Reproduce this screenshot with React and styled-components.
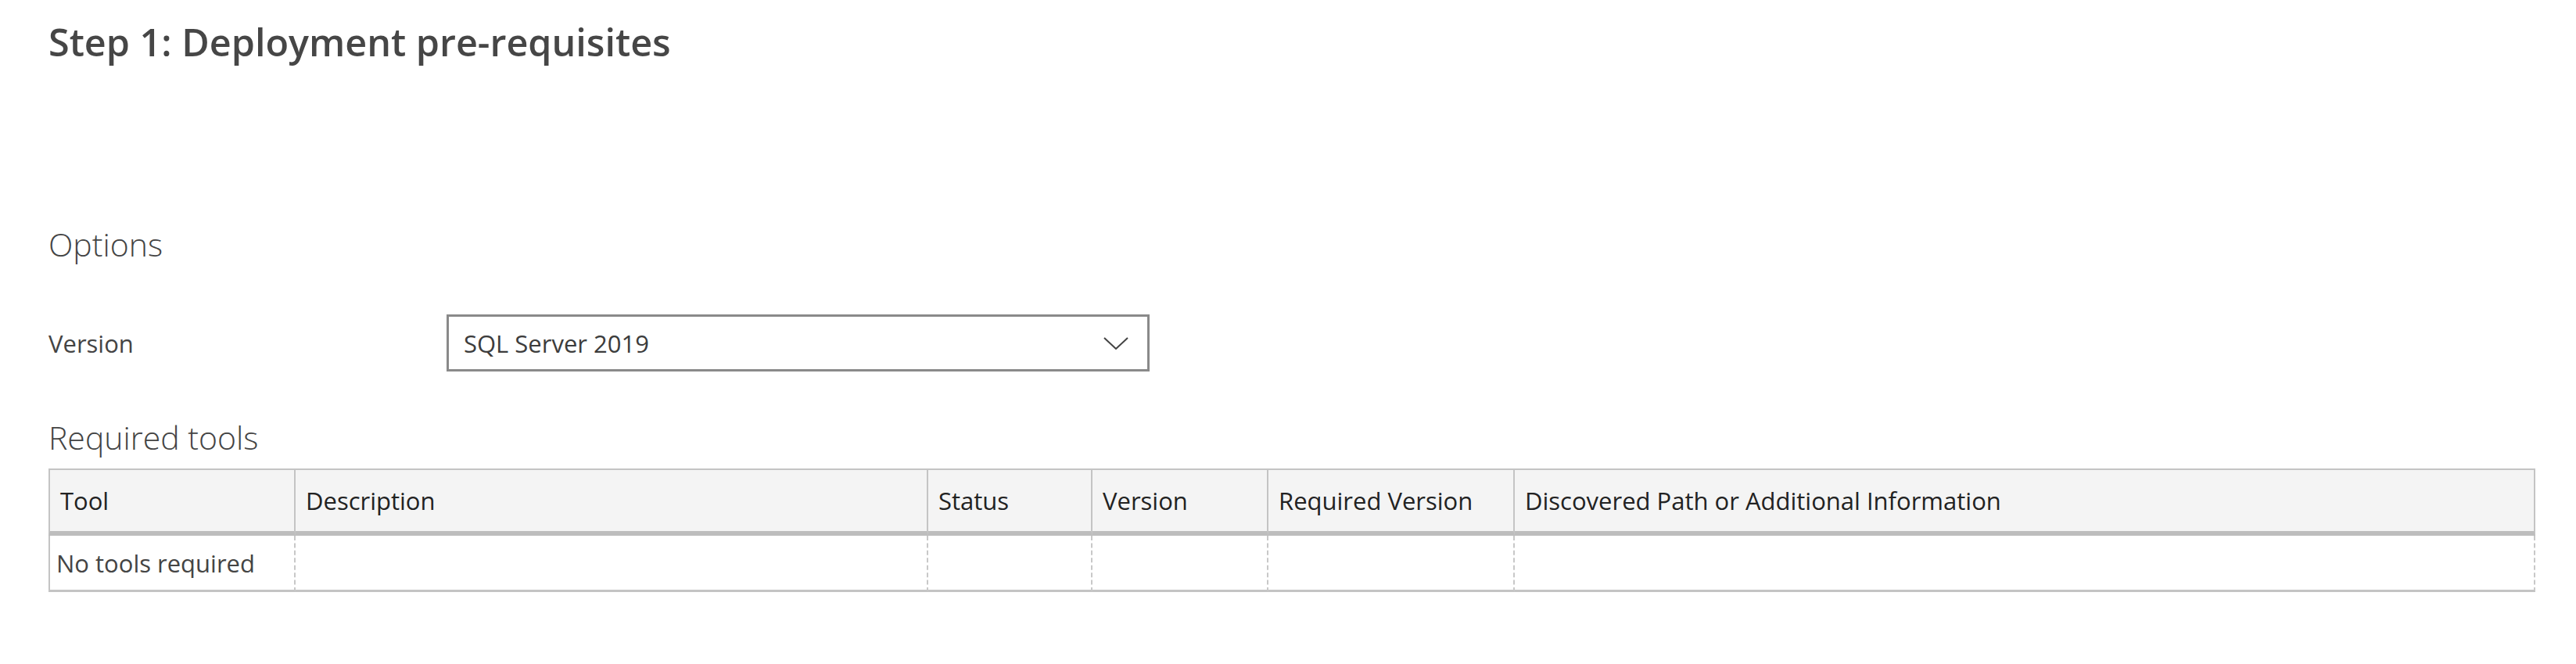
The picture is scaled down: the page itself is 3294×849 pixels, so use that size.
import React from 'react';
import styled, { createGlobalStyle } from 'styled-components';

const GlobalStyle = createGlobalStyle`
  html, body {
    margin: 0;
    padding: 0;
    background: #ffffff;
  }
  body {
    font-family: "Open Sans", "Noto Sans", "Liberation Sans", sans-serif;
    color: #444444;
  }
`;

const Page = styled.div`
  padding: 20px 52px 40px 62px;
  display: flex;
  flex-direction: column;
`;

const Title = styled.h1`
  margin: 0;
  font-size: 48.5px;
  line-height: 67px;
  font-weight: 600;
  color: #464646;
`;

const SectionTitle = styled.h2`
  margin: ${(props) => props.top}px 0 0 0;
  font-size: 41px;
  line-height: 56px;
  font-weight: 300;
  color: #444444;
`;

const FormRow = styled.div`
  margin-top: 62px;
  display: grid;
  grid-template-columns: 509px 899px;
  align-items: center;
`;

const Label = styled.label`
  font-size: 31px;
  color: #444444;
`;

const Select = styled.div`
  box-sizing: border-box;
  height: 73px;
  border: 3px solid #8a8a8a;
  display: flex;
  align-items: center;
  justify-content: space-between;
  padding: 0 24px 0 19px;
  font-size: 31px;
  color: #3c3c3c;
  background: #fff;
`;

const Chevron = () => (
  <svg width="32" height="16" viewBox="0 0 32 16">
    <polyline points="1,1 16,15 31,1" fill="none" stroke="#444" strokeWidth="2" />
  </svg>
);

const Table = styled.table`
  margin-top: 12px;
  width: 3180px;
  table-layout: fixed;
  border-collapse: separate;
  border-spacing: 0;
  font-size: 31px;
`;

const HeadCell = styled.th`
  width: ${(props) => props.w}px;
  box-sizing: border-box;
  height: 86px;
  padding: 0 13px;
  text-align: left;
  font-weight: 400;
  color: #222222;
  background: #f4f4f4;
  border-top: 2px solid #c4c4c4;
  border-bottom: 6px solid #bdbdbd;
  border-right: 2px solid #c4c4c4;
  &:first-child {
    border-left: 2px solid #c4c4c4;
  }
`;

const BodyCell = styled.td`
  box-sizing: border-box;
  height: 72px;
  padding: 0 8px;
  color: #444444;
  border-bottom: 3px solid #c4c4c4;
  border-right: 2px dashed #c8c8c8;
  &:first-child {
    border-left: 2px solid #c4c4c4;
  }
`;

const columns = [
  { name: 'Tool', width: 316 },
  { name: 'Description', width: 809 },
  { name: 'Status', width: 210 },
  { name: 'Version', width: 225 },
  { name: 'Required Version', width: 315 },
  { name: 'Discovered Path or Additional Information', width: 1305 },
];

export default function App() {
  return (
    <>
      <GlobalStyle />
      <Page>
        <Title>Step 1: Deployment pre-requisites</Title>
        <SectionTitle top={197}>Options</SectionTitle>
        <FormRow>
          <Label>Version</Label>
          <Select>
            <span>SQL Server 2019</span>
            <Chevron />
          </Select>
        </FormRow>
        <SectionTitle top={56}>Required tools</SectionTitle>
        <Table>
          <thead>
            <tr>
              {columns.map((col) => (
                <HeadCell key={col.name} w={col.width}>{col.name}</HeadCell>
              ))}
            </tr>
          </thead>
          <tbody>
            <tr>
              <BodyCell>No tools required</BodyCell>
              <BodyCell />
              <BodyCell />
              <BodyCell />
              <BodyCell />
              <BodyCell />
            </tr>
          </tbody>
        </Table>
      </Page>
    </>
  );
}
